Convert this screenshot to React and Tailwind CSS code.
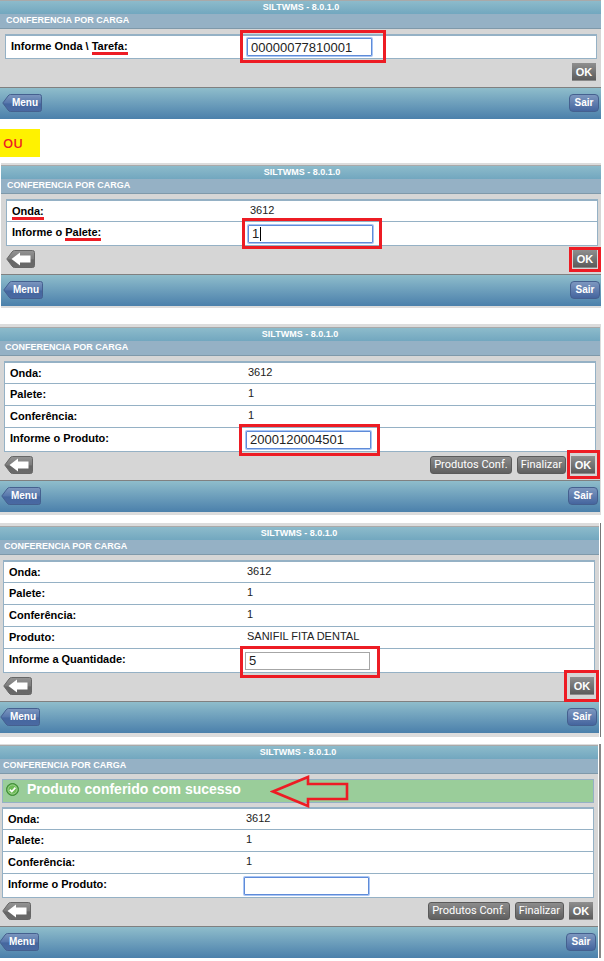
import { useId } from "react";

// red marker drawn over a control
function Mark({ className }) {
  return (
    <span
      className={`pointer-events-none absolute border-3 border-[#ed1c24] ${className}`}
    />
  );
}

function Underlined({ children }) {
  return <span className="border-b-3 border-[#ed1c24]">{children}</span>;
}

function BackButton() {
  return (
    <button aria-label="Voltar" className="h-[18px] w-[29px]">
      <svg width="29" height="18" viewBox="0 0 29 18">
        <defs>
          <linearGradient id="backFill" x1="0" y1="0" x2="0" y2="1">
            <stop offset="0" stopColor="#949494" />
            <stop offset="0.5" stopColor="#7c7c7c" />
            <stop offset="0.55" stopColor="#666" />
            <stop offset="1" stopColor="#6a6a6a" />
          </linearGradient>
        </defs>
        <path
          d="M8.5 0.5H26.5Q28.5 0.5 28.5 2.5V15.5Q28.5 17.5 26.5 17.5H8.5Q7 17.5 6 16L0.8 9L6 2Q7 0.5 8.5 0.5Z"
          fill="url(#backFill)"
          stroke="#666"
        />
        <path d="M5.5 9L14 2.5V5.5H24.5V12.5H14V15.5Z" fill="#fff" />
      </svg>
    </button>
  );
}

function MenuButton() {
  return (
    <button className="relative h-[18px] w-[40px] pl-[6px] text-[10px] leading-[18px] font-bold text-white">
      <svg className="absolute inset-0" width="40" height="18" viewBox="0 0 40 18">
        <defs>
          <linearGradient id="menuFill" x1="0" y1="0" x2="0" y2="1">
            <stop offset="0" stopColor="#7d97bf" />
            <stop offset="0.5" stopColor="#5777ac" />
            <stop offset="0.55" stopColor="#45679f" />
            <stop offset="1" stopColor="#4a69a2" />
          </linearGradient>
        </defs>
        <path
          d="M8.5 0.5H37.5Q39.5 0.5 39.5 2.5V15.5Q39.5 17.5 37.5 17.5H8.5Q7 17.5 6 16L0.8 9L6 2Q7 0.5 8.5 0.5Z"
          fill="url(#menuFill)"
          stroke="#45608f"
        />
      </svg>
      <span className="relative">Menu</span>
    </button>
  );
}

function GrayButton({ children }) {
  return (
    <button className="h-[18px] rounded-[3px] border border-[#5a5a5a] bg-linear-to-b from-[#8c8c8c] to-[#606060] px-[3px] font-[family-name:Roboto,sans-serif] text-[11px] leading-[16px] font-normal text-white">
      {children}
    </button>
  );
}

function Field({ id, value, focused = true, caret, mark }) {
  return (
    <div className="relative w-[125px]">
      <input
        id={id}
        type="text"
        defaultValue={value}
        className={`block h-[18px] w-full border bg-white px-[3px] text-[13px] leading-[16px] text-[#222] outline-none ${
          focused
            ? "rounded-[1px] border-[#5f8bd8] ring-1 ring-[#a9c6f5]"
            : "border-[#a6a6a6]"
        }`}
      />
      {caret && <span className="absolute top-[2px] left-[12px] h-[14px] w-px bg-black" />}
      {mark && <Mark className={mark} />}
    </div>
  );
}

function Screen({ className, inset, message, rows, field, back = true, extra, okMark }) {
  const id = useId();
  return (
    <section className={`bg-[#d6d6d6] ${className ?? ""}`}>
      <header className="border-t border-[#a9a9a9] text-[9px] font-bold text-white">
        <h1
          className={`h-[13px] bg-linear-to-b from-[#8dbbcb] to-[#72a7bf] text-center leading-[13px] ${inset}`}
        >
          SILTWMS - 8.0.1.0
        </h1>
        <h2
          className={`h-[15px] border-b border-[#7f99aa] bg-[#95b1c5] leading-[13px] ${inset}`}
        >
          <span className="pl-px">CONFERENCIA POR CARGA</span>
        </h2>
      </header>

      <div className={`pt-[5px] ${inset}`}>
        {message && (
          <div className="relative mb-1 flex h-[24px] items-center border border-[#95b1c5] bg-[#9acd9a] pl-[3px]">
            <svg className="mb-1" width="13" height="13" viewBox="0 0 13 13">
              <circle cx="6.5" cy="6.5" r="6" fill="#4da33c" stroke="#3c8a35" />
              <circle cx="6.5" cy="6.5" r="4.6" fill="#6cba55" stroke="#b5dca8" strokeWidth="0.8" />
              <path d="M3.8 6.6L5.8 8.6L9.4 4.6" fill="none" stroke="#fff" strokeWidth="1.6" />
            </svg>
            <p className="pb-1 pl-2 text-[14px] leading-[16px] font-bold text-white">
              {message}
            </p>
            <svg
              className="absolute -top-[6px] left-[267px]"
              width="80"
              height="36"
              viewBox="0 0 80 36"
            >
              <path
                d="M3 17.5L38 3V10H77V25H38V32Z"
                fill="none"
                stroke="#ed1c24"
                strokeWidth="2.6"
              />
            </svg>
          </div>
        )}

        <table className="w-full table-fixed border-separate border-spacing-0 border-x border-t-2 border-[#95b1c5] bg-white text-[11px] leading-[16px] text-[#222]">
          <tbody>
            {rows.map((row) => (
              <tr key={row.label} className="group">
                <th
                  scope="row"
                  className="h-[22px] w-[241px] border-b border-[#95b1c5] pt-[2px] pl-[5px] text-left align-top font-bold text-black group-first:h-[21px]"
                >
                  {row.mark ? <Underlined>{row.label}</Underlined> : row.label}
                </th>
                <td className="border-b border-[#95b1c5] pt-px pl-[2px] align-top">{row.value}</td>
              </tr>
            ))}
            <tr className="group">
              <th
                scope="row"
                className="h-[24px] w-[241px] border-b border-[#95b1c5] pt-[2px] pl-[5px] text-left align-top font-bold text-black group-first:h-[23px]"
              >
                <label htmlFor={id}>
                  {field.label} {field.marked && <Underlined>{field.marked}</Underlined>}
                </label>
              </th>
              <td className="border-b border-[#95b1c5]">
                <Field
                  id={id}
                  value={field.value}
                  focused={field.focused}
                  caret={field.caret}
                  mark={field.mark}
                />
              </td>
            </tr>
          </tbody>
        </table>

        <div className="flex h-[28px] items-start justify-between pt-1 pr-px">
          <div>{back && <BackButton />}</div>
          <div className="flex gap-[5px]">
            {extra && (
              <>
                <GrayButton>Produtos Conf.</GrayButton>
                <GrayButton>Finalizar</GrayButton>
              </>
            )}
            <div className="relative">
              <button className="block h-[18px] w-[24px] border-b border-[#8a8a8a] bg-linear-to-b from-[#8f8f8f] to-[#5c5c5c] text-[11px] leading-[18px] font-bold text-white">
                OK
              </button>
              {okMark && <Mark className={okMark} />}
            </div>
          </div>
        </div>
      </div>

      <footer
        className={`h-[32px] border-t border-[#808080] bg-linear-to-b from-[#8fbdcb] to-[#4b80ab] pt-[6px] ${inset}`}
      >
        <div className="-mr-[2px] -ml-[3px] flex justify-between">
          <MenuButton />
          <button className="h-[18px] w-[30px] rounded-[4px] border border-[#45608f] bg-linear-to-b from-[#7d97bf] to-[#45659e] text-[10px] leading-[16px] font-bold text-white">
            Sair
          </button>
        </div>
      </footer>
    </section>
  );
}

export default function App() {
  return (
    <main className="bg-white pr-[3px] font-['Liberation_Sans',Arial,sans-serif]">
      <Screen
        inset="pl-[5px] pr-[4px]"
        rows={[]}
        back={false}
        field={{
          label: "Informe Onda \\",
          marked: "Tarefa:",
          value: "00000077810001",
          mark: "-top-[8px] -right-[14px] -bottom-[7px] -left-[7px]",
        }}
      />

      <p className="mt-[10px] mb-[6px] h-[28px] w-[40px] bg-[#fff200] pl-[3px] font-[family-name:'Open_Sans',sans-serif] text-[13px] leading-[28px] font-semibold text-[#ed1c24]">
        OU
      </p>

      <Screen
        className="ml-px border-t-2 border-b-2 border-[#dcdcdc]"
        inset="pl-[5px] pr-[3px]"
        rows={[{ label: "Onda:", value: "3612", mark: true }]}
        field={{
          label: "Informe o",
          marked: "Palete:",
          value: "1",
          caret: true,
          mark: "-top-[7px] -right-[9px] -bottom-[6px] -left-[6px]",
        }}
        okMark="-top-[3px] -right-[4px] -bottom-[4px] -left-[4px]"
      />

      <Screen
        className="mt-4 border-t-3 border-r border-b-3 border-[#dcdcdc]"
        inset="pl-[4px] pr-[4px]"
        rows={[
          { label: "Onda:", value: "3612" },
          { label: "Palete:", value: "1" },
          { label: "Conferência:", value: "1" },
        ]}
        field={{
          label: "Informe o Produto:",
          value: "2000120004501",
          mark: "-top-[7px] -right-[9px] -bottom-[7px] -left-[7px]",
        }}
        extra
        okMark="-top-[6px] -right-[5px] -bottom-[5px] -left-[4px]"
      />

      <div className="mt-2 border-r border-[#777] pr-px">
        <Screen
          className="border-t-3 border-b-4 border-[#dcdcdc]"
          inset="pl-[3px] pr-[4px]"
          rows={[
            { label: "Onda:", value: "3612" },
            { label: "Palete:", value: "1" },
            { label: "Conferência:", value: "1" },
            { label: "Produto:", value: "SANIFIL FITA DENTAL" },
          ]}
          field={{
            label: "Informe a Quantidade:",
            value: "5",
            focused: false,
            mark: "-top-[6px] -right-[10px] -bottom-[8px] -left-[5px]",
          }}
          okMark="-top-[7px] -right-[5px] -bottom-[7px] -left-[6px]"
        />
      </div>

      <div className="mt-[7px] border-r-2 border-[#888] pr-px">
        <Screen
          className="border-t border-[#dcdcdc]"
          inset="pl-[2px] pr-[4px]"
          message="Produto conferido com sucesso"
          rows={[
            { label: "Onda:", value: "3612" },
            { label: "Palete:", value: "1" },
            { label: "Conferência:", value: "1" },
          ]}
          field={{ label: "Informe o Produto:", value: "" }}
          extra
        />
      </div>
    </main>
  );
}
